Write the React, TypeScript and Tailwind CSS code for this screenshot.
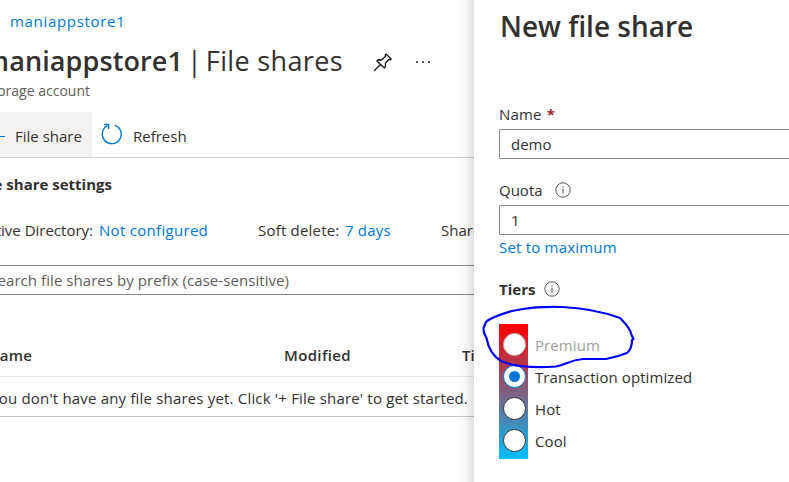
import type { ReactNode } from 'react';

function InfoIcon() {
  return (
    <svg className="block h-4 w-4 shrink-0" viewBox="0 0 16 16" fill="none" stroke="#5a5856">
      <circle cx="8" cy="8" r="7.2" strokeWidth="1" />
      <path d="M8 6.8V11.5M8 4.2V5.4" strokeWidth="1.1" />
    </svg>
  );
}

function PinIcon() {
  return (
    <svg className="block h-5 w-5 shrink-0" viewBox="0 0 20 20" fill="none" stroke="#1b1a19" strokeWidth="1.4" strokeLinejoin="round">
      <path d="M13.2 2.2L18.2 7.1L16.9 7.9L15.8 7.6L12.4 11.2V14.6L11.3 16L3.9 9.1L5.2 7.8L8.7 8L12.5 4.3L12.3 3Z" />
      <path d="M7.5 12.6L1.2 18.7" />
    </svg>
  );
}

function RefreshIcon() {
  return (
    <svg className="block h-[22px] w-[22px] shrink-0" viewBox="0 0 22 22" fill="none" stroke="#0078d4" strokeWidth="1.4">
      <path d="M13.6 2.1A9.5 9.5 0 1 1 6.4 2.7" />
      <path d="M3.2 1.5H7.6V6" />
    </svg>
  );
}

type TierProps = { label: string; state?: 'disabled' | 'checked' };

function Tier({ label, state }: TierProps) {
  const ring =
    state === 'disabled' ? 'border-[#b5b3b1]' : state === 'checked' ? 'border-[#0078d4]' : 'border-[#323130]';
  return (
    <div className="flex h-8 items-center">
      <span className={`flex h-[23px] w-[23px] shrink-0 items-center justify-center rounded-full border bg-white ${ring}`}>
        {state === 'checked' && <span className="h-[11px] w-[11px] rounded-full bg-[#0078d4]" />}
      </span>
      <span className={`ml-[9px] pt-px tracking-[0.08px] ${state === 'disabled' ? 'text-[#a19f9d]' : ''}`}>{label}</span>
    </div>
  );
}

function EndAligned({ className, children }: { className: string; children: ReactNode }) {
  return <div className={`flex shrink-0 justify-end whitespace-nowrap ${className}`}>{children}</div>;
}

function StoragePage() {
  return (
    <main className="relative h-full w-[474px] shrink-0 overflow-hidden bg-white">
      <div className="flex h-[41px] items-center pl-[10px] pt-px tracking-[0.68px] text-[#0078d4]">maniappstore1</div>
      <div className="flex h-[40px] items-center">
        <EndAligned className="w-[183px] text-[27px] font-semibold tracking-[0.1px]">maniappstore1</EndAligned>
        <span className="ml-[4px] text-[27px]">|</span>
        <span className="ml-[4px] whitespace-nowrap text-[27px] tracking-[0.35px]">File shares</span>
        <div className="ml-auto flex items-center gap-[22px] pr-[43px] pt-[2px]">
          <PinIcon />
          <svg className="h-1 w-4" viewBox="0 0 16 4" fill="#1b1a19">
            <circle cx="2" cy="2" r="1" />
            <circle cx="8" cy="2" r="1" />
            <circle cx="14" cy="2" r="1" />
          </svg>
        </div>
      </div>
      <EndAligned className="h-[31px] w-[90px] text-[14px] leading-[20px] text-[#605e5c]">Storage account</EndAligned>
      <div className="flex h-[46px] border-b border-[#d2d0ce] pb-px">
        <div className="-mb-px flex w-[92px] items-center bg-[#f3f2f1] pb-px pt-[4px]">
          <span className="h-px w-[5px] bg-[#0078d4]" />
          <span className="ml-[10px] whitespace-nowrap">File share</span>
        </div>
        <div className="flex items-center pl-[9px]">
          <RefreshIcon />
          <span className="ml-[10px] pt-[4px]">Refresh</span>
        </div>
      </div>
      <EndAligned className="h-[51px] w-[112px] items-center font-bold">File share settings</EndAligned>
      <div className="flex h-[42px] items-center whitespace-nowrap">
        <EndAligned className="w-[93px]">Active Directory:</EndAligned>
        <span className="ml-[6px] w-[159px] shrink-0 tracking-[0.3px] text-[#0078d4]">Not configured</span>
        <span className="w-[87px] shrink-0 tracking-[0.2px]">Soft delete:</span>
        <span className="w-[96px] shrink-0 tracking-[0.2px] text-[#0078d4]">7 days</span>
        <span>Share capacity:</span>
      </div>
      <div className="mt-[14px] flex h-[30px] items-center border-y border-[#8a8886] text-[#605e5c]">
        <EndAligned className="w-[289px] tracking-[0.06px]">Search file shares by prefix (case-sensitive)</EndAligned>
      </div>
      <div className="mt-[40px] flex h-[42px] items-center border-b border-[#edebe9] pb-px font-semibold">
        <EndAligned className="w-[32px] tracking-[0.2px]">Name</EndAligned>
        <span className="ml-[252px] w-[178px] shrink-0 tracking-[0.35px]">Modified</span>
        <span>Tier</span>
      </div>
      <div className="flex h-[40px] items-center border-b border-[#c8c6c4]">
        <EndAligned className="w-[468px] pt-[3px] tracking-[0.18px]">You don't have any file shares yet. Click '+ File share' to get started.</EndAligned>
      </div>
      <div className="absolute inset-y-0 right-0 w-[20px] bg-[linear-gradient(to_right,rgba(0,0,0,0),rgba(0,0,0,0.025)_50%,rgba(0,0,0,0.12))]" />
    </main>
  );
}

function NewFileShare() {
  return (
    <aside className="relative h-full min-w-0 grow bg-white pl-[25px]">
      <h1 className="h-[100px] pl-px text-[28px] font-semibold leading-[52px]">New file share</h1>
      <div className="flex h-[29px] items-center pb-px tracking-[0.2px]">
        Name <span className="ml-[5px] font-bold text-[#a4262c]">*</span>
      </div>
      <div className="flex h-[30px] items-center rounded-l-[2px] border border-r-0 border-[#8a8886] pl-[11px]">demo</div>
      <div className="mt-[16px] flex h-[30px] items-center pb-px">
        Quota
        <span className="ml-[12px]">
          <InfoIcon />
        </span>
      </div>
      <div className="flex h-[30px] items-center rounded-l-[2px] border border-r-0 border-[#8a8886] pl-[11px]">1</div>
      <div className="flex h-[24px] items-center tracking-[0.2px] text-[#0078d4]">Set to maximum</div>
      <div className="mt-[15px] flex h-[30px] items-center font-bold">
        Tiers
        <span className="ml-[9px]">
          <InfoIcon />
        </span>
      </div>
      <div className="mt-[20px] h-[135px] w-[29px] whitespace-nowrap bg-[linear-gradient(#ff0000,#00bfff)] pl-[4px] pt-[4px]">
        <Tier label="Premium" state="disabled" />
        <Tier label="Transaction optimized" state="checked" />
        <Tier label="Hot" />
        <Tier label="Cool" />
      </div>
      <svg className="absolute left-0 top-[300px] h-[80px] w-[180px]" viewBox="474 300 180 80" fill="none" stroke="#0000ff" strokeWidth="2.2" strokeLinejoin="round" strokeLinecap="round">
        <path d="M512 311C502 314 491 317 486 322L483.500 328L484 333L486.500 338C488 347 493 356 501 361C512 366 532 368 556 366.500C566 365 569 360 583 359L606 359C616 357 622 355 627 353C632 349 632 344 632 340L633.500 339L631.500 335C631 329 624 322 620 318C609 314 588 308 562 307C545 306.500 534 307 523 309L512 311" />
      </svg>
    </aside>
  );
}

export default function App() {
  return (
    <div className="flex h-[482px] w-[789px] overflow-hidden bg-white font-['Open_Sans','Noto_Sans',sans-serif] text-[15px] leading-[20px] text-[#323130]">
      <StoragePage />
      <NewFileShare />
    </div>
  );
}
